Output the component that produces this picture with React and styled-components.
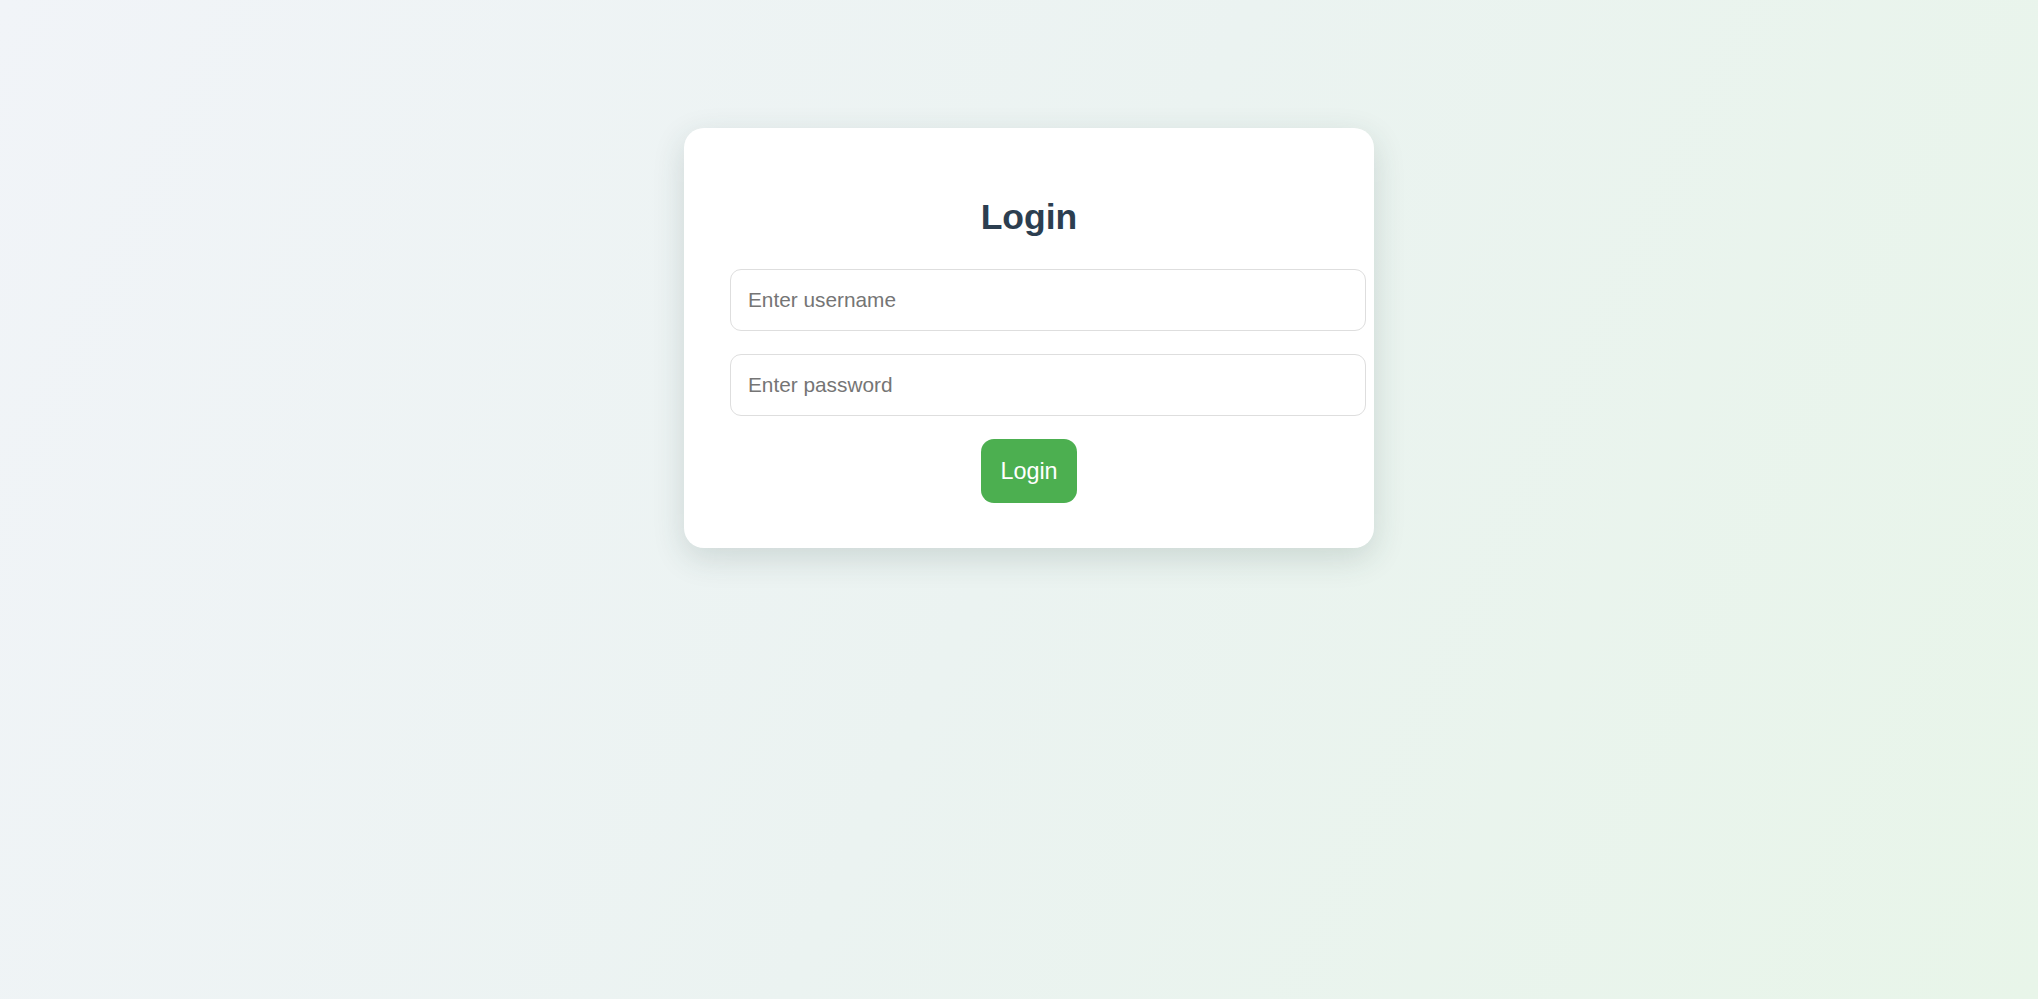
import React from "react";
import styled, { createGlobalStyle } from "styled-components";

const GlobalStyle = createGlobalStyle`
  html, body {
    margin: 0;
    padding: 0;
    min-height: 100%;
  }
  body {
    font-family: "Liberation Sans", Arial, sans-serif;
    background: linear-gradient(115deg, #f1f4f8 0%, #ebf3f1 50%, #e8f5e9 100%);
    min-height: 100vh;
  }
`;

const Page = styled.main`
  min-height: 100vh;
  box-sizing: border-box;
  display: flex;
  justify-content: center;
  align-items: flex-start;
  padding: 128px 0 0 20px;
`;

const Card = styled.form`
  width: 599px;
  padding: 45px 45.5px;
  background: #ffffff;
  border-radius: 20px;
  box-shadow: 0 10px 32px rgba(40, 70, 60, 0.16);
  text-align: center;
`;

const Title = styled.h2`
  margin: 24.3px 0 30.9px;
  font-size: 35.5px;
  line-height: normal;
  font-weight: 700;
  color: #2c3e50;
`;

const Field = styled.input`
  display: block;
  width: 100%;
  box-sizing: content-box;
  height: 24px;
  padding: 18px 17.5px;
  margin: 0 0 23px;
  border: 1px solid #dedede;
  border-radius: 11px;
  font-family: "Liberation Sans", Arial, sans-serif;
  font-size: 20.8px;
  color: #333;
  background: #fff;
  outline: none;

  &::placeholder {
    color: #757575;
  }
`;

const Button = styled.button`
  display: inline-block;
  padding: 18.5px 19px;
  border: none;
  border-radius: 13px;
  background: #4caf50;
  color: #ffffff;
  font-family: "Liberation Sans", Arial, sans-serif;
  font-size: 23.4px;
  line-height: 27px;
  cursor: pointer;
`;

export default function App() {
  return (
    <>
      <GlobalStyle />
      <Page>
        <Card onSubmit={(e) => e.preventDefault()}>
          <Title>Login</Title>
          <Field type="text" placeholder="Enter username" />
          <Field type="password" placeholder="Enter password" />
          <Button type="submit">Login</Button>
        </Card>
      </Page>
    </>
  );
}
